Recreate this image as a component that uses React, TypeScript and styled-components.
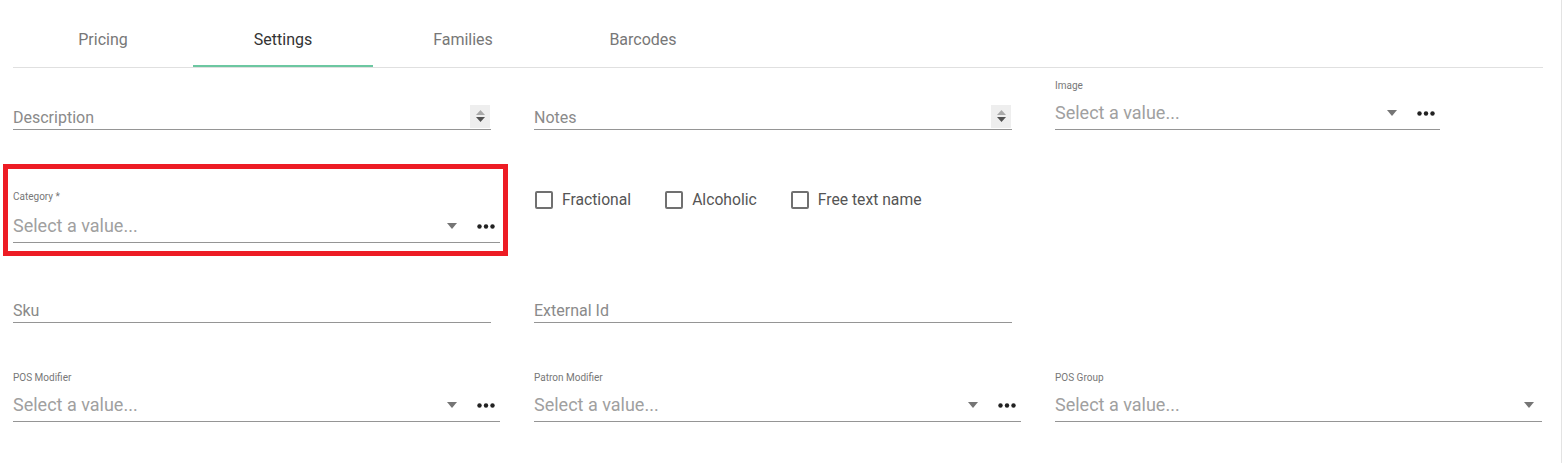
import React from "react";
import styled, { createGlobalStyle } from "styled-components";

const GlobalStyle = createGlobalStyle`
  html, body {
    margin: 0;
    padding: 0;
    background: #fff;
    font-family: Roboto, "Noto Sans", Arial, sans-serif;
  }
`;

const Page = styled.div`
  width: 1562px;
  height: 463px;
  border-right: 1px solid #e3e3e3;
  padding-left: 13px;
  box-sizing: border-box;
`;

const TabBar = styled.div`
  display: flex;
  width: 1530px;
  height: 68px;
  border-bottom: 1px solid #e0e0e0;
  box-sizing: border-box;
`;

const Tab = styled.div<{ $active?: boolean }>`
  width: 180px;
  display: flex;
  align-items: flex-start;
  justify-content: center;
  padding-top: 30px;
  box-sizing: border-box;
  font-size: 16px;
  line-height: 19px;
  color: ${(p) => (p.$active ? "#333" : "#777")};
  border-bottom: 2px solid ${(p) => (p.$active ? "#6cc7a1" : "transparent")};
`;

const Row = styled.div<{ $h: number }>`
  display: grid;
  grid-template-columns: 521px 521px 521px;
  align-items: end;
  height: ${(p) => p.$h}px;
`;

const Field = styled.div<{ $w: number }>`
  width: ${(p) => p.$w}px;
  display: flex;
  flex-direction: column;
  position: relative;
`;

const Highlight = styled(Field)`
  &::after {
    content: "";
    position: absolute;
    top: -26px;
    left: -10px;
    right: -8px;
    bottom: -13px;
    border: 5px solid #ed1c24;
    pointer-events: none;
  }
`;

const Label = styled.div`
  font-size: 10px;
  line-height: 14px;
  color: #777;
  margin-bottom: 4px;
`;

const CategoryLabel = styled(Label)`
  margin-bottom: 6px;
`;

const SelectControl = styled.div<{ $h?: number }>`
  display: flex;
  align-items: center;
  height: ${(p) => p.$h ?? 32}px;
  border-bottom: 1px solid #959595;
`;

const Placeholder = styled.span`
  flex: 1;
  font-size: 18px;
  line-height: 30px;
  color: #a0a0a0;
`;

const Caret = styled.svg<{ $dots?: boolean }>`
  width: 10px;
  height: 6px;
  margin-right: ${(p) => (p.$dots ? "20px" : "8px")};
`;

const Dots = styled.svg`
  width: 18px;
  height: 5px;
  margin-right: 5px;
`;

const TextControl = styled.div`
  display: flex;
  align-items: center;
  height: 24px;
  border-bottom: 1px solid #959595;
`;

const TextPlaceholder = styled.span`
  flex: 1;
  font-size: 16px;
  line-height: 24px;
  padding-top: 1px;
  color: #8a8a8a;
`;

const Spinner = styled.div`
  width: 20px;
  height: 23px;
  background: #eeeeee;
  display: flex;
  flex-direction: column;
  align-items: center;
  justify-content: center;
  gap: 2px;
  margin-bottom: 2px;
  margin-right: 1px;
`;

const Checks = styled.div`
  align-self: start;
  margin-top: 60px;
  display: flex;
  align-items: center;
  gap: 34px;
  padding-left: 1px;
`;

const Check = styled.label`
  display: flex;
  align-items: center;
  gap: 9px;
  font-size: 15.7px;
  color: #555;
`;

const Box = styled.span`
  width: 14px;
  height: 14px;
  border: 2px solid #707070;
  border-radius: 2px;
`;

const Empty = styled.div``;

const CaretIcon = ({ dots }: { dots?: boolean }) => (
  <Caret $dots={dots} viewBox="0 0 10 6">
    <path d="M0 0h10L5 6z" fill="#757575" />
  </Caret>
);

const DotsIcon = () => (
  <Dots viewBox="0 0 18 5">
    <circle cx="2.5" cy="2.5" r="2.2" fill="#222" />
    <circle cx="9" cy="2.5" r="2.2" fill="#222" />
    <circle cx="15.5" cy="2.5" r="2.2" fill="#222" />
  </Dots>
);

const SelectControlRow = ({ dots }: { dots?: boolean }) => (
  <SelectControl>
    <Placeholder>Select a value...</Placeholder>
    <CaretIcon dots={dots} />
    {dots && <DotsIcon />}
  </SelectControl>
);

const SelectField = ({ label, w, dots }: { label: string; w: number; dots?: boolean }) => (
  <Field $w={w}>
    <Label>{label}</Label>
    <SelectControlRow dots={dots} />
  </Field>
);

const TextField = ({ placeholder, spinner }: { placeholder: string; spinner?: boolean }) => (
  <Field $w={478}>
    <TextControl>
      <TextPlaceholder>{placeholder}</TextPlaceholder>
      {spinner && (
        <Spinner>
          <svg width="9" height="5" viewBox="0 0 9 5">
            <path d="M0 5h9L4.5 0z" fill="#a8a8a8" />
          </svg>
          <svg width="9" height="5" viewBox="0 0 9 5">
            <path d="M0 0h9L4.5 5z" fill="#505050" />
          </svg>
        </Spinner>
      )}
    </TextControl>
  </Field>
);

const tabs = ["Pricing", "Settings", "Families", "Barcodes"];

export default function App() {
  return (
    <>
      <GlobalStyle />
      <Page>
        <TabBar>
          {tabs.map((t) => (
            <Tab key={t} $active={t === "Settings"}>
              {t}
            </Tab>
          ))}
        </TabBar>
        <Row $h={62}>
          <TextField placeholder="Description" spinner />
          <TextField placeholder="Notes" spinner />
          <SelectField label="Image" w={385} dots />
        </Row>
        <Row $h={113}>
          <Highlight $w={487}>
            <CategoryLabel>Category *</CategoryLabel>
            <SelectControlRow dots />
          </Highlight>
          <Checks>
            <Check>
              <Box />
              Fractional
            </Check>
            <Check>
              <Box />
              Alcoholic
            </Check>
            <Check>
              <Box />
              Free text name
            </Check>
          </Checks>
          <Empty />
        </Row>
        <Row $h={80}>
          <TextField placeholder="Sku" />
          <TextField placeholder="External Id" />
          <Empty />
        </Row>
        <Row $h={99}>
          <SelectField label="POS Modifier" w={487} dots />
          <SelectField label="Patron Modifier" w={487} dots />
          <SelectField label="POS Group" w={487} />
        </Row>
      </Page>
    </>
  );
}
